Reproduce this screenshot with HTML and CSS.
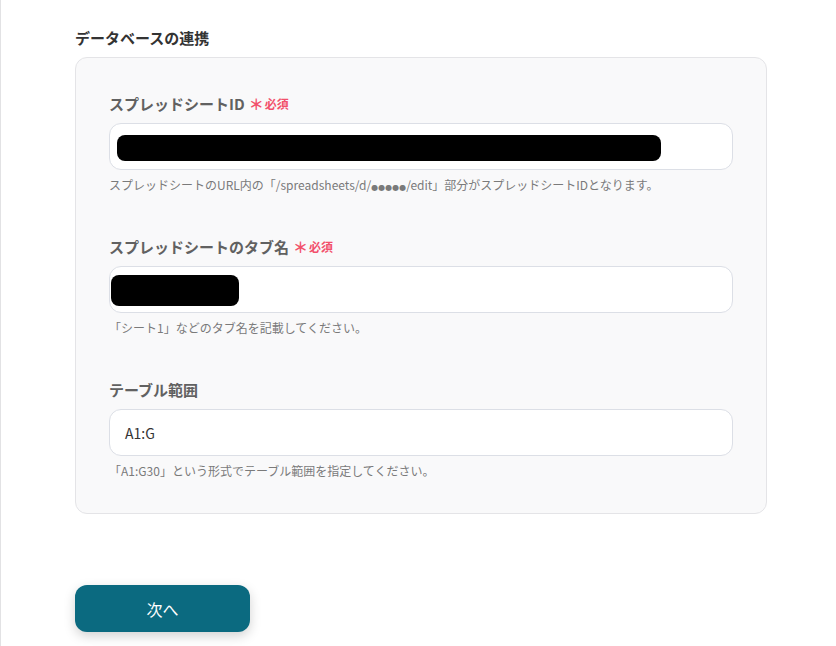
FILE: index.html
```html
<!DOCTYPE html>
<html lang="ja">
<head>
<meta charset="utf-8">
<title>データベースの連携</title>
<link rel="stylesheet" href="styles.css">
</head>
<body>
<div class="page">
  <h2 class="section-title">データベースの連携</h2>
  <div class="card">
    <div class="field">
      <div class="label">スプレッドシートID<span class="req"><span class="ast">＊</span>必須</span></div>
      <div class="input input-id"><span class="redact redact-id"></span></div>
      <p class="help">スプレッドシートのURL内の「/spreadsheets/d/<span class="dots">●●●●●</span>/edit」部分がスプレッドシートIDとなります。</p>
    </div>
    <div class="field">
      <div class="label">スプレッドシートのタブ名<span class="req"><span class="ast">＊</span>必須</span></div>
      <div class="input input-tab"><span class="redact redact-tab"></span></div>
      <p class="help">「シート1」などのタブ名を記載してください。</p>
    </div>
    <div class="field">
      <div class="label">テーブル範囲</div>
      <div class="input input-text">A1:G</div>
      <p class="help">「A1:G30」という形式でテーブル範囲を指定してください。</p>
    </div>
  </div>
  <button class="next-btn" type="button">次へ</button>
</div>
</body>
</html>
```
FILE: styles.css
```css
html, body {
  margin: 0;
  padding: 0;
  background: #ffffff;
}
body {
  font-family: "Noto Sans CJK JP", "Noto Sans", sans-serif;
  border-left: 1px solid #e2e2e4;
  min-height: 646px;
  box-sizing: border-box;
}
.page {
  padding: 28px 0 0 74px;
}
.section-title {
  margin: 0 0 9px;
  font-size: 15px;
  line-height: 20px;
  font-weight: 700;
  color: #333333;
}
.card {
  width: 692px;
  box-sizing: border-box;
  background: #f9f9fa;
  border: 1px solid #e4e4e7;
  border-radius: 12px;
  padding: 36px 33px 33px 33px;
  display: flex;
  flex-direction: column;
  gap: 43px;
}
.field {
  display: flex;
  flex-direction: column;
}
.label {
  font-size: 15px;
  line-height: 20px;
  height: 20px;
  font-weight: 700;
  color: #616161;
  display: flex;
  align-items: center;
}
.req {
  color: #f2506b;
  font-size: 12px;
  font-weight: 700;
  margin-left: 4px;
  display: inline-flex;
  align-items: center;
  height: 20px;
}
.ast {
  font-size: 15px;
  margin-right: 1px;
}
.input {
  margin-top: 9px;
  height: 47px;
  box-sizing: border-box;
  background: #ffffff;
  border: 1px solid #dcdfe6;
  border-radius: 12px;
  display: flex;
  align-items: center;
}
.input-id {
  padding-left: 7px;
}
.input-tab {
  padding-left: 1px;
}
.input-text {
  padding-left: 15px;
  font-size: 14px;
  color: #333333;
}
.redact {
  display: block;
  background: #000000;
}
.redact-id {
  width: 544px;
  height: 26px;
  border-radius: 8px;
  margin-top: 2px;
}
.redact-tab {
  width: 128px;
  height: 31px;
  border-radius: 8px;
  margin-top: 1px;
}
.help {
  margin: 6px 0 0;
  font-size: 12px;
  line-height: 18px;
  height: 18px;
  color: #7a7a7a;
  white-space: nowrap;
}
.dots {
  font-family: "DejaVu Sans", sans-serif;
  font-size: 8px;
  line-height: 0;
}
.next-btn {
  display: block;
  margin-top: 71px;
  width: 175px;
  height: 47px;
  border: none;
  border-radius: 12px;
  background: #0b6a80;
  color: #ffffff;
  font-family: "Noto Sans CJK JP", "Noto Sans", sans-serif;
  font-size: 16px;
  box-shadow: 0 4px 12px rgba(0, 0, 0, 0.18);
  cursor: pointer;
}
```
